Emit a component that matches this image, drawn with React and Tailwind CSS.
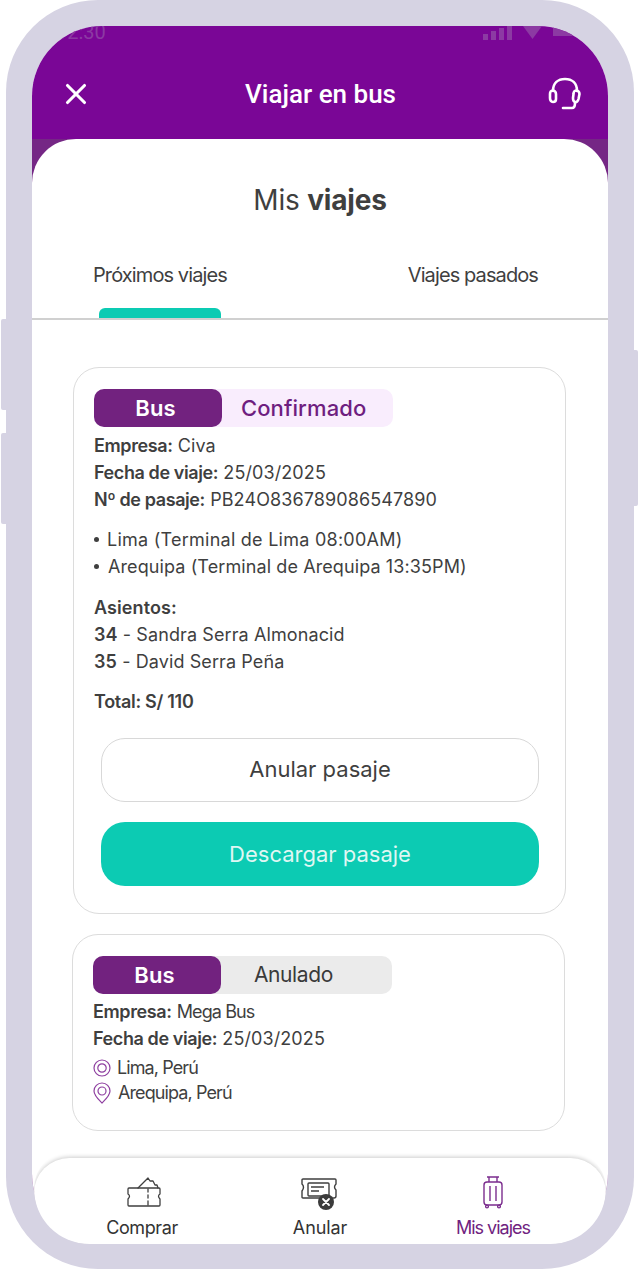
import { X } from 'lucide-react';

function Headset() {
  return (
    <svg width="34" height="34" viewBox="0 0 34 34" fill="none" stroke="white" strokeWidth="2.6" strokeLinecap="round" strokeLinejoin="round">
      <path d="M5 14 C5 6 10 2 17 2 C24 2 29 6 29 14" />
      <path d="M4.5 13.5 C6.5 13.5 8 15 8 17 V22 C8 24 6.5 25 5 25 C3 25 2 23 2 21 V17 C2 15 3 13.5 4.5 13.5 Z" />
      <path d="M28 13.5 C30 13.5 31.5 15 31.5 17 L30.5 22 C30 24 28.5 25.5 27 25 C25.5 24.5 25 23 25 21 L25.5 17 C25.5 15 26.5 13.5 28 13.5 Z" />
      <path d="M27 26 C27 29 26 31 24 31 L15 31" />
    </svg>
  );
}

function BuyIcon() {
  return (
    <svg width="36" height="33" viewBox="0 0 36 33" fill="none" stroke="#3f3f3f" strokeWidth="1.3" strokeLinejoin="round" strokeLinecap="round">
      <path d="M3 13 H33 Q34 13 34 14 V19 Q31 21 34 24 V30 Q34 31 33 31 H3 Q2 31 2 30 V24 Q5 21 2 19 V14 Q2 13 3 13 Z" />
      <path d="M12 13 L22 3 L24 6 L27 6 L29 10 L31 10 L32 13" />
      <path d="M22 14 V17 M22 20 V23 M22 26 V30" />
    </svg>
  );
}

function CancelIcon() {
  return (
    <svg width="40" height="34" viewBox="0 0 40 34" fill="none" className="mt-[5px]">
      <path d="M3 2 H35 Q36 2 36 3 V7 Q33 10 36 13 V19 Q36 21 34 21 H3 Q2 21 2 20 V14 Q5 10 2 7 V3 Q2 2 3 2 Z" stroke="#3f3f3f" strokeWidth="1.4" />
      <rect x="8" y="6" width="21" height="13" rx="1" stroke="#3f3f3f" strokeWidth="1.4" />
      <path d="M11 10 H24 M11 14 H19" stroke="#3f3f3f" strokeWidth="1.4" />
      <circle cx="26" cy="25" r="8" fill="#3b3b3b" />
      <path d="M23 22 L29 28 M29 22 L23 28" stroke="white" strokeWidth="1.8" strokeLinecap="round" />
    </svg>
  );
}

function LuggageIcon() {
  return (
    <svg width="22" height="34" viewBox="0 0 22 34" fill="none" stroke="#7b2d8e" strokeWidth="1.4" strokeLinejoin="round" className="mt-[2px]">
      <path d="M7 7 V2 H15 V7 M5 2 H17" />
      <rect x="2" y="7" width="18" height="23" rx="3" />
      <path d="M8 11 V26 M14 11 V26" />
      <circle cx="5" cy="31.5" r="1.4" />
      <circle cx="17" cy="31.5" r="1.4" />
    </svg>
  );
}

function OriginIcon() {
  return (
    <svg width="18" height="18" viewBox="0 0 18 18" fill="none" stroke="#8e3fa0" strokeWidth="1.2">
      <circle cx="9" cy="9" r="8" />
      <circle cx="9" cy="9" r="4.2" />
    </svg>
  );
}

function PinIcon() {
  return (
    <svg width="20" height="22" viewBox="0 0 20 22" fill="none" stroke="#8e3fa0" strokeWidth="1.2">
      <path d="M10 21 C6 17 2 13.5 2 9 A8 8 0 0 1 18 9 C18 13.5 14 17 10 21 Z" />
      <circle cx="10" cy="9" r="4" />
    </svg>
  );
}

function StatusPill({ label, className, labelClass }) {
  return (
    <div className={`flex h-[38px] w-[299px] items-center rounded-[10px] ${className}`}>
      <div className="flex h-full w-[128px] items-center justify-center rounded-[10px] bg-[#72227f] pr-[5px] text-[22px] font-semibold text-white">Bus</div>
      <div className={labelClass}>{label}</div>
    </div>
  );
}

function Info({ label, children }) {
  return (
    <p className="h-[27px] leading-[27px]">
      <span className="font-semibold tracking-[-0.4px]">{label}</span> {children}
    </p>
  );
}

function NavItem({ icon, label, active, className, labelClass }) {
  return (
    <div className={`flex flex-col items-center ${className}`}>
      <div className="flex h-[36px] items-center justify-center">{icon}</div>
      <span className={`mt-[7px] text-[18px] leading-[24px] ${labelClass} ${active ? 'text-[#70237f]' : 'text-[#333]'}`}>{label}</span>
    </div>
  );
}

export default function App() {
  return (
    <div className="relative h-[1271px] w-[640px] overflow-hidden bg-white font-['Inter',sans-serif] text-[#3f3f3f]">
      {/* Botones laterales */}
      <div className="absolute left-[1px] top-[319px] h-[91px] w-[7px] rounded-l-[2px] bg-[#d6d3e3]" />
      <div className="absolute left-[1px] top-[433px] h-[91px] w-[7px] rounded-l-[2px] bg-[#d6d3e3]" />
      <div className="absolute left-[632px] top-[350px] h-[156px] w-[6px] rounded-r-[2px] bg-[#d6d3e3]" />

      {/* Marco */}
      <div className="relative ml-[6px] h-[1269px] w-[628px] rounded-[92px] bg-[#d6d3e3] px-[26px] pt-[26px]">
        <div className="flex h-[1218px] w-[576px] flex-col overflow-hidden rounded-[70px] bg-white">
          {/* Header */}
          <div className="relative h-[113px] shrink-0 bg-[#7a0696]">
            <div className="flex h-[16px] items-start justify-between overflow-hidden pl-[24px] pr-[35px]">
              <span className="-mt-[6px] font-['Roboto',sans-serif] text-[20px] leading-[24px] text-[#8c3aa3]">12:30</span>
              <div className="flex items-start">
                <div className="flex h-[14px] items-end gap-[3px]">
                  <div className="h-[6px] w-[5px] bg-[#8c3aa3]" />
                  <div className="h-[9px] w-[5px] bg-[#8c3aa3]" />
                  <div className="h-[12px] w-[5px] bg-[#8c3aa3]" />
                  <div className="h-[14px] w-[5px] bg-[#8c3aa3]" />
                </div>
                <div className="ml-[11px] h-[13px] w-[19px] bg-[#8c3aa3] [clip-path:polygon(0_0,100%_0,50%_100%)]" />
                <div className="ml-[11px] h-[10px] w-[20px] bg-[#8c3aa3]" />
              </div>
            </div>
            <div className="flex items-center justify-between pl-[27px] pr-[26px] pt-[35px]">
              <X size={34} color="white" strokeWidth={2.2} />
              <span className="font-['Roboto',sans-serif] text-[26px] font-medium leading-[34px] text-white">Viajar en bus</span>
              <Headset />
            </div>
          </div>

          {/* Contenido */}
          <div className="min-h-0 flex-1 bg-[#752785]">
            <div className="flex h-full flex-col rounded-t-[44px] bg-white">
              <h1 className="pt-[42px] text-center text-[28px] leading-[38px] tracking-[-0.2px]">
                Mis <span className="font-bold">viajes</span>
              </h1>

              {/* Tabs */}
              <div className="mt-[43px] flex h-[58px] shrink-0 justify-between border-b-2 border-[#d0d0d0] pl-[61px] pr-[70px] text-[20px] leading-[26px] tracking-[-0.9px]">
                <div className="flex flex-col items-center">
                  <span>Próximos viajes</span>
                  <div className="mt-[20px] h-[11px] w-[122px] rounded-t-[6px] bg-[#0ccbb3]" />
                </div>
                <span>Viajes pasados</span>
              </div>

              {/* Lista */}
              <div className="min-h-0 flex-1 overflow-hidden pl-[41px] pr-[42px] pt-[47px] text-[18px] tracking-[0.1px]">
                <div className="h-[547px] rounded-[26px] border border-[#dcdcdc] px-[20px] pt-[21px]">
                  <StatusPill
                    label="Confirmado"
                    className="bg-[#f9edfd] text-[#6f1e80]"
                    labelClass="pl-[19px] text-[22px] font-medium tracking-[0.1px]"
                  />
                  <div className="mt-[5px]">
                    <Info label="Empresa:">Civa</Info>
                    <Info label="Fecha de viaje:">25/03/2025</Info>
                    <Info label="Nº de pasaje:">PB24O836789086547890</Info>
                  </div>
                  <ul className="mt-[13px]">
                    <li className="flex h-[27px] items-center gap-[8px] leading-[27px] tracking-[0.25px]"><span className="size-[5px] rounded-full bg-[#3f3f3f]" />Lima (Terminal de Lima 08:00AM)</li>
                    <li className="flex h-[27px] items-center gap-[9px] leading-[27px]"><span className="size-[5px] rounded-full bg-[#3f3f3f]" />Arequipa (Terminal de Arequipa 13:35PM)</li>
                  </ul>
                  <div className="mt-[14px]">
                    <p className="h-[27px] font-semibold leading-[27px]">Asientos:</p>
                    <p className="h-[27px] leading-[27px]"><span className="font-semibold">34</span> - Sandra Serra Almonacid</p>
                    <p className="h-[27px] leading-[27px]"><span className="font-semibold">35</span> - David Serra Peña</p>
                  </div>
                  <p className="mt-[13px] h-[27px] font-semibold leading-[27px] tracking-[-0.3px]">Total: S/ 110</p>
                  <div className="ml-[7px] mt-[23px] flex w-[438px] flex-col gap-[20px] text-[22px] tracking-[0px]">
                    <button className="h-[64px] rounded-[24px] border border-[#d8d8d8] bg-white pb-[2px]">Anular pasaje</button>
                    <button className="h-[64px] rounded-[24px] bg-[#0ccbb3] text-[#dff7f3]">Descargar pasaje</button>
                  </div>
                </div>

                <div className="-ml-px mr-px mt-[20px] h-[197px] rounded-[26px] border border-[#dcdcdc] px-[20px] pt-[21px]">
                  <StatusPill
                    label="Anulado"
                    className="bg-[#ebebeb] text-[#3a3a3a]"
                    labelClass="pl-[33px] text-[21px] tracking-[-0.4px]"
                  />
                  <div className="mt-[4px]">
                    <Info label="Empresa:"><span className="tracking-[-0.9px]">Mega Bus</span></Info>
                    <Info label="Fecha de viaje:">25/03/2025</Info>
                  </div>
                  <div className="mt-[3px] flex h-[25px] items-center gap-[6px] tracking-[-0.9px]"><OriginIcon />Lima, Perú</div>
                  <div className="flex h-[25px] items-center gap-[6px] tracking-[-0.9px]"><span className="-ml-px flex"><PinIcon /></span>Arequipa, Perú</div>
                </div>
              </div>
            </div>
          </div>
        </div>

        {/* Navegación inferior */}
        <div className="absolute left-[28px] top-[1158px] grid h-[86px] w-[572px] grid-cols-[216px_140px_216px] rounded-t-[46px] rounded-b-[66px] bg-white pt-[15px] shadow-[0_-1px_4px_rgba(0,0,0,0.2)] [clip-path:inset(-8px_0_0_0_round_46px_46px_66px_66px)]">
          <NavItem icon={<span className="ml-[4px] flex"><BuyIcon /></span>} label="Comprar" labelClass="tracking-[-0.4px]" />
          <NavItem icon={<CancelIcon />} label="Anular" labelClass="tracking-[-0.1px]" />
          <NavItem icon={<LuggageIcon />} label="Mis viajes" active className="pr-[10px]" labelClass="tracking-[-1px]" />
        </div>
      </div>
    </div>
  );
}
